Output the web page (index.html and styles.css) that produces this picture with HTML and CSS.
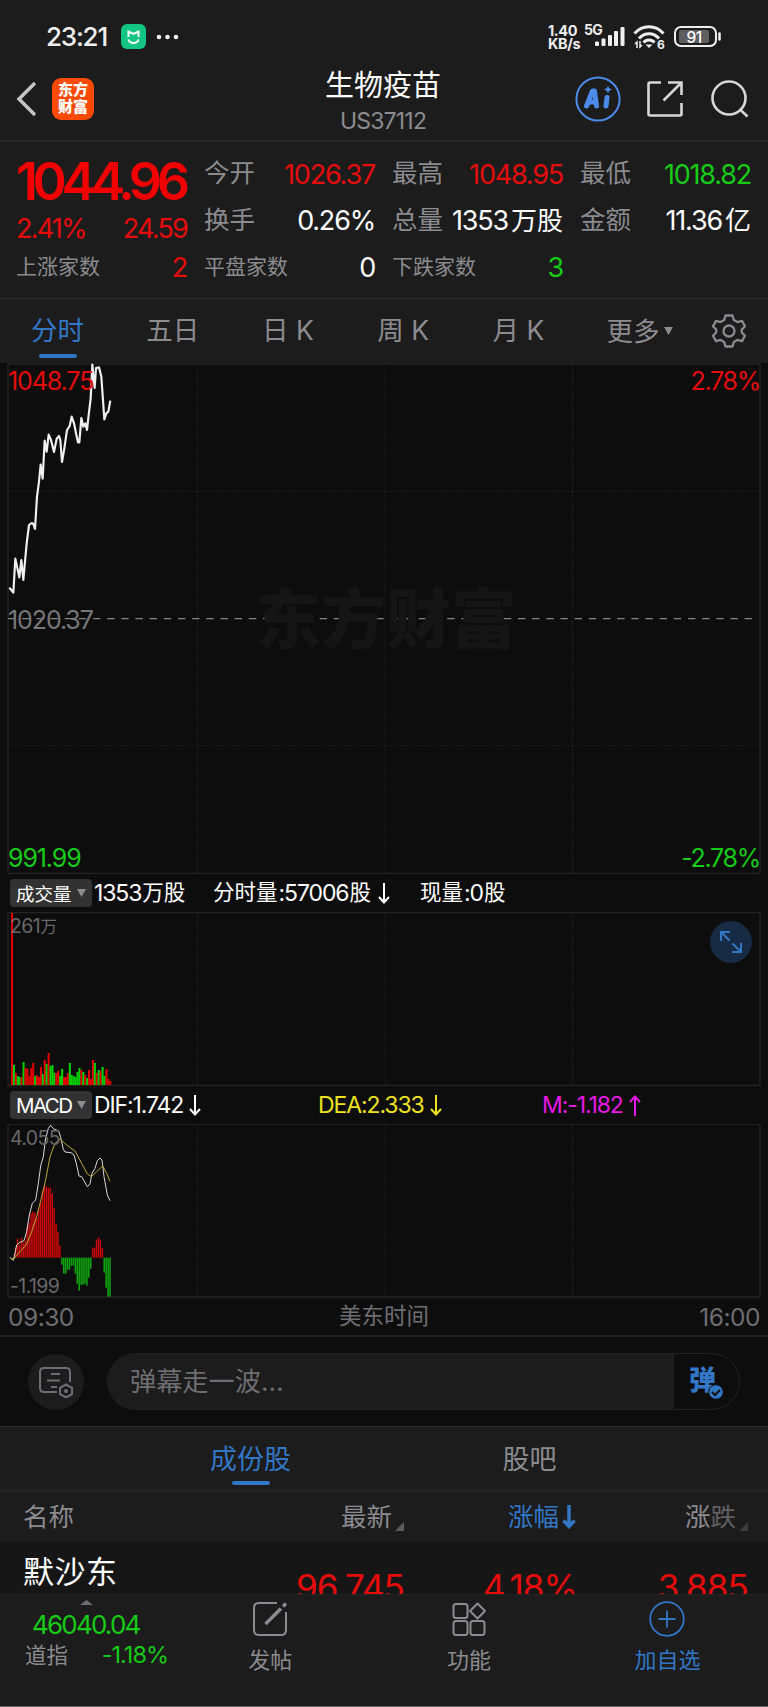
FILE: index.html
```html
<!DOCTYPE html>
<html lang="zh-CN">

<head>
    <meta charset="UTF-8">
    <meta name="viewport" content="width=device-width, initial-scale=1.0">
    <title>生物疫苗 US37112</title>
    <link rel="stylesheet" href="styles.css">
</head>

<body>
    <div class="status">
        <span class="clock">23:21</span>
        <svg class="mi" width="25" height="25" viewBox="0 0 25 25">
            <rect width="25" height="25" rx="6" fill="#12c583" />
            <path d="M7.500 13V7.500l5 2.500 5-2.500V13M7.500 15.500c1 4.500 9 4.500 10 0" fill="none" stroke="#fff" stroke-width="2" />
        </svg>
        <svg class="dots" width="24" height="6" viewBox="0 0 24 6" fill="#eee">
            <circle cx="3" cy="3" r="2.300" />
            <circle cx="11.500" cy="3" r="2.300" />
            <circle cx="20" cy="3" r="2.300" />
        </svg>
        <div class="speed">1.40<br>KB/s</div>
        <span class="net">5G</span>
        <svg class="signal" width="30" height="20" viewBox="0 0 30 20" fill="#eee">
            <rect x="0" y="14.500" width="4" height="4.500" rx="1" />
            <rect x="6.500" y="11.500" width="4" height="7.500" rx="1" />
            <rect x="13" y="8" width="4" height="11" rx="1" />
            <rect x="19" y="4" width="4" height="15" rx="1" />
            <rect x="25.500" y="0" width="4" height="19" rx="1" />
        </svg>
        <svg class="wifi" width="32" height="26" viewBox="0 0 32 26" fill="none" stroke="#eee" stroke-width="3">
            <path d="M1.500 9.500C9.500 .5 22.500 .5 30.500 9.500" />
            <path d="M6 14.500c5.500-6.500 14.500-6.500 20 0" />
            <path d="M10.500 18.500c3-3.500 8-3.500 11 0" />
            <path d="M12.500 20.500h7L16 24z" fill="#eee" stroke="none" />
            <path d="M4 24v-6l-2 2M7 17v6l2-2" stroke-width="1.500" />
            <text class="six" x="24" y="24.500" fill="#eee" stroke="none">6</text>
        </svg>
        <svg class="battery" width="48" height="22" viewBox="0 0 48 22">
            <rect x="1" y="1" width="41" height="19" rx="6" fill="none" stroke="#eee" stroke-width="2" />
            <rect x="5" y="4" width="30" height="13" rx="2" fill="#5e5e5e" />
            <path d="M45.500 7.500v6" stroke="#eee" stroke-width="2.500" stroke-linecap="round" />
            <text x="12.500" y="16.500" fill="#fff">91</text>
        </svg>
    </div>

    <div class="header">
        <svg class="back" width="22" height="36" viewBox="0 0 22 36">
            <path d="M19 2L3 18l16 16" fill="none" stroke="#c4c4c4" stroke-width="3.500" />
        </svg>
        <div class="logo">东方<br>财富</div>
        <div class="title">
            <h1>生物疫苗</h1>
            <p>US37112</p>
        </div>
        <svg class="ai" width="46" height="46" viewBox="0 0 46 46">
            <circle cx="23" cy="23" r="21.600" fill="none" stroke="#4d8bea" stroke-width="2" />
            <path d="M11.500 30L17.500 15h2L21.500 30M14 26h6M32 21.500L31 30" fill="none" stroke="#4d8bea" stroke-width="5" stroke-linecap="round" stroke-linejoin="round" />
            <path d="M33 9.500l1.200 2.800 2.800 1.200-2.800 1.200L33 17.500l-1.200-2.800-2.800-1.200 2.800-1.200z" fill="#4d8bea" />
        </svg>
        <svg class="share" width="36" height="36" viewBox="0 0 36 36" fill="none" stroke="#d6d6d6" stroke-width="2.600">
            <path d="M14 1.500H3Q1.500 1.500 1.500 3v30Q1.500 34.500 3 34.500h30q1.500 0 1.500-1.500V22M21 1.500h13.500V14M34 2L16.500 19.500" />
        </svg>
        <svg class="search" width="38" height="38" viewBox="0 0 38 38" fill="none" stroke="#d6d6d6" stroke-width="2.600">
            <circle cx="18" cy="18" r="16.500" />
            <path d="M28.500 29l8 7.500" />
        </svg>
    </div>

    <div class="quote">
        <div class="now">
            <div class="price red">1044.96</div>
            <div class="pair red"><span>2.41%</span><span>24.59</span></div>
        </div>
        <div class="cell"><label>今开</label><span class="red">1026.37</span></div>
        <div class="cell"><label>最高</label><span class="red">1048.95</span></div>
        <div class="cell"><label>最低</label><span class="green">1018.82</span></div>
        <div class="cell"><label>换手</label><span>0.26%</span></div>
        <div class="cell"><label>总量</label><span>1353<i>万股</i></span></div>
        <div class="cell"><label>金额</label><span>11.36<i>亿</i></span></div>
        <div class="cell small"><label>上涨家数</label><span class="red">2</span></div>
        <div class="cell small"><label>平盘家数</label><span>0</span></div>
        <div class="cell small"><label>下跌家数</label><span class="green">3</span></div>
    </div>

    <div class="tabs">
        <div class="tab active">分时</div>
        <div class="tab">五日</div>
        <div class="tab">日 K</div>
        <div class="tab">周 K</div>
        <div class="tab">月 K</div>
        <div class="tab more">更多<svg width="9" height="8" viewBox="0 0 10 9"><path d="M0 0h10L5 9z" fill="#8b8b90" /></svg></div>
        <svg class="gear" width="34" height="34" viewBox="0 0 34 34" fill="none" stroke="#8b8b90" stroke-width="2.300" stroke-linejoin="round">
            <path d="M13.500 1.500h7l1.300 4.500 3.600 2.100 4.600-1.200 3 5.300-3.200 3.300v3l3.200 3.300-3 5.300-4.600-1.200-3.600 2.100-1.300 4.500h-7L12.200 28l-3.600-2.100L4 27.100l-3-5.300 3.200-3.300v-3L1 12.200l3-5.300 4.600 1.200L12.200 6z" />
            <circle cx="17" cy="17" r="5.500" />
        </svg>
    </div>

    <div class="charts">
        <div class="chart price-chart">
            <div class="watermark">东方财富</div>
            <svg viewBox="0 9 2304 1533">
                <g class="grid">
                    <path d="M592.500 12V1540M1155 12V1540M1717.500 12V1540M24 394H2280M24 1157H2280" />
                </g>
                <path class="frame" d="M24 12H2280V1540H24z" />
                <path class="base" d="M24 776H2265" />
                <polyline class="price-line" points="28,683 40,698 46,596 58,652 64,600 70,660 80,550 87,495 95,489 100,492 105,507 111,410 117,365 122,314 128,356 134,242 140,275 146,224 153,240 162,276 170,236 177,228 181,240 186,306 193,265 201,210 209,198 215,170 222,190 228,220 234,247 238,247 244,174 250,200 256,190 261,210 266,165 272,115 277,14 284,84 288,24 297,22 304,50 313,178 319,160 325,155 331,122" />
            </svg>
            <span class="label top red">1048.75</span>
            <span class="label top right red">2.78%</span>
            <span class="label mid">1020.37</span>
            <span class="label bottom green">991.99</span>
            <span class="label bottom right green">-2.78%</span>
        </div>

        <div class="info">
            <div class="pick">成交量<svg width="9" height="8" viewBox="0 0 9 8"><path d="M0 0h9L4.500 8z" fill="#8b8b90" /></svg></div>
            <span class="v1">1353<i>万股</i></span>
            <span class="v2"><i>分时量</i>:57006<i>股</i><svg class="arrow" width="12" height="21" viewBox="0 0 12 21"><path d="M6 0v19M1 14l5 5.500L11 14" /></svg></span>
            <span class="v3"><i>现量</i>:0<i>股</i></span>
        </div>
        <div class="chart sub">
            <svg viewBox="0 156 2304 522">
                <path class="grid" d="M592.500 158V676M1155 158V676M1717.500 158V676" />
                <path class="frame" d="M24 158H2280V676H24z" />
                <g id="volume"></g>
            </svg>
            <span class="label scale-top">261<i>万</i></span>
            <div class="expand">
                <svg width="22" height="22" viewBox="0 0 22 22" fill="none" stroke="#3277c6" stroke-width="2">
                    <path d="M1 10V1h9M1 1l8.500 8.500M21 12v9h-9M21 21l-8.500-8.500" />
                </svg>
            </div>
        </div>

        <div class="info">
            <div class="pick macd">MACD<svg width="9" height="8" viewBox="0 0 9 8"><path d="M0 0h9L4.500 8z" fill="#8b8b90" /></svg></div>
            <span class="dif">DIF:1.742<svg class="arrow" width="12" height="21" viewBox="0 0 12 21"><path d="M6 0v19M1 14l5 5.500L11 14" /></svg></span>
            <span class="dea">DEA:2.333<svg class="arrow" width="12" height="21" viewBox="0 0 12 21"><path d="M6 0v19M1 14l5 5.500L11 14" /></svg></span>
            <span class="m">M:-1.182<svg class="arrow" width="12" height="21" viewBox="0 0 12 21"><path d="M6 21V2M1 7l5-5.500L11 7" /></svg></span>
        </div>
        <div class="chart sub">
            <svg viewBox="0 132 2304 522">
                <path class="grid" d="M592.500 133V651M1155 133V651M1717.500 133V651" />
                <path class="frame" d="M24 133H2280V651H24z" />
                <g id="macd"></g>
                <polyline class="line-dif" points="30,533 40,541 46,515 50,495 60,487 72,482 80,455 88,405 97,370 107,360 115,310 122,258 130,230 136,180 145,145 152,136 160,146 176,153 182,172 190,208 195,216 213,218 222,225 230,255 237,288 245,290 262,320 270,312 276,280 285,265 292,242 300,234 306,240 312,290 322,345 330,362" />
                <polyline class="line-dea" points="30,533 40,538 60,515 80,492 95,455 110,410 125,350 137,300 150,230 165,190 180,177 200,195 225,213 245,250 262,282 274,290 290,275 308,258 320,280 330,304" />
            </svg>
            <span class="label scale-top">4.055</span>
            <span class="label scale-bottom">-1.199</span>
        </div>

        <div class="time">
            <span>09:30</span>
            <i>美东时间</i>
            <span>16:00</span>
        </div>
    </div>

    <div class="danmu">
        <div class="danmu-set">
            <svg width="36" height="32" viewBox="0 0 36 32" fill="none" stroke="#6e6e72" stroke-width="2">
                <path d="M19 26H6q-4 0-4-4V6q0-4 4-4h22q4 0 4 4v10M13 8h9M9 14.500h13M13 21h6" />
                <path d="M28 18.500l6 3.300v6.400l-6 3.300-6-3.300v-6.400z" />
                <circle cx="28" cy="25" r="1" />
            </svg>
        </div>
        <div class="danmu-box">
            <div class="danmu-input">弹幕走一波…</div>
            <div class="danmu-on">弹
                <svg width="16" height="16" viewBox="0 0 16 16">
                    <circle cx="8" cy="8" r="7.300" fill="#3277c6" stroke="#0d0d0d" />
                    <path d="M4 8l3 3 5-5" fill="none" stroke="#0d0d0d" stroke-width="2" />
                </svg>
            </div>
        </div>
    </div>

    <div class="list-tabs">
        <div class="list-tab active">成份股</div>
        <div class="list-tab">股吧</div>
    </div>

    <div class="row head">
        <span>名称</span>
        <span>最新<svg class="corner" width="9" height="9" viewBox="0 0 9 9"><path d="M9 0v9H0z" fill="#5c5c5f" /></svg></span>
        <span class="blue">涨幅<svg class="sort" width="14" height="24" viewBox="0 0 14 24"><path d="M7 0v21M1.500 15.500L7 21.500l5.500-6" fill="none" stroke="#3277c6" stroke-width="3.500" /></svg></span>
        <span>涨<em>跌</em><svg class="corner" width="9" height="9" viewBox="0 0 9 9"><path d="M9 0v9H0z" fill="#3b3b3d" /></svg></span>
    </div>
    <div class="row stock">
        <span class="name">默沙东</span>
        <span class="red">96.745</span>
        <span class="red">4.18%</span>
        <span class="red">3.885</span>
    </div>

    <div class="footer">
        <div class="index">
            <svg class="caret" width="13" height="5" viewBox="0 0 13 5"><path d="M0 5l6.500-5L13 5z" fill="#6e6e72" /></svg>
            <div class="index-value">46040.04</div>
            <div class="index-row"><i>道指</i><span>-1.18%</span></div>
        </div>
        <div class="action">
            <svg width="36" height="36" viewBox="0 0 36 36" fill="none" stroke="#8b8b90" stroke-width="2">
                <path d="M25 2H7Q2 2 2 7v22q0 5 5 5h22q5 0 5-5V11" />
                <path d="M13.500 23L29 7.500M31 5.500L34 2.500" stroke-width="3.500" />
            </svg>
            <span>发帖</span>
        </div>
        <div class="action">
            <svg width="36" height="36" viewBox="0 0 36 36" fill="none" stroke="#8b8b90" stroke-width="2">
                <rect x="2.500" y="3" width="14" height="14" rx="2.500" />
                <rect x="2.500" y="20" width="14" height="14" rx="2.500" />
                <rect x="19.500" y="20" width="14" height="14" rx="2.500" />
                <path d="M26.500 2.500l7.500 7.500-7.500 7.500L19 10z" stroke-linejoin="round" />
            </svg>
            <span>功能</span>
        </div>
        <div class="action blue">
            <svg width="36" height="36" viewBox="0 0 36 36" fill="none" stroke="#3277c6" stroke-width="1.800">
                <circle cx="18" cy="18" r="16.800" />
                <path d="M18 9.500v17M9.500 18h17" />
            </svg>
            <span>加自选</span>
        </div>
    </div>

    <script>
        var step = 5.78;

        // volume per minute, sign gives the colour
        var volume = [172, -20, 12, -9, -8, 8, -23, 17, 16, 9, 17, 22, -9, 10, 8, 18, -11, 25, -21, 32, -19, -20, -12,
            12, 14, -9, -16, 8, 8, 12, -22, -10, -9, -8, -13, -17, 15, -13, 10, -7, 15, 6, 25, -22, 12, -15, 14, -18,
            -9, 16, 6, 4];

        var macd = [0, -1, 10, 19, 13, 20, 15, 17, 30, 35, 44, 46, 45, 40, 49, 55, 67, 72, 71, 70, 70, 64, 50, 34, 26,
            12, -7, -16, -16, -12, -12, -8, -8, -16, -26, -33, -27, -27, -26, -28, -20, -11, 10, 10, 18, 20, 18, 10,
            -15, -30, -39, -39];

        function bars(id, data, base, signed, width) {
            var add = "";
            for (var i = 0; i < data.length; i++) {
                var h = Math.abs(data[i]) * 3;
                var y = signed && data[i] < 0 ? base : base - h;
                add += `<rect class="${data[i] < 0 ? "down" : "up"}" x="${33 + i * step}" y="${y}" width="${width}" height="${h}"/>`;
            }
            document.querySelector(id).innerHTML = add;
        }

        bars("#volume", volume, 675, false, 6.2);
        bars("#macd", macd, 533, true, 4.6);
    </script>
</body>

</html>
```

FILE: styles.css
```css
* {
    padding: 0;
    margin: 0;
    box-sizing: border-box;
}

body {
    width: 768px;
    height: 1707px;
    overflow: hidden;
    display: flex;
    flex-direction: column;
    background-color: #1c1c1c;
    color: #fff;
    font-family: Inter, "Noto Sans CJK SC", sans-serif;
    border-bottom: 1px solid #626262;
}

body > div {
    flex-shrink: 0;
}

svg {
    display: block;
    flex-shrink: 0;
}

i, em {
    font-style: normal;
    letter-spacing: 0;
}

.red {
    color: #e60c0c;
}

.green {
    color: #16cc16;
}

.blue {
    color: #3277c6;
}

/* status bar */

.status {
    height: 70px;
    padding: 3px 46px 0 46px;
    display: flex;
    align-items: center;
    color: #eee;
}

.clock {
    font-size: 26px;
    font-weight: 500;
    width: 75px;
    letter-spacing: -1.2px;
}

.dots {
    margin-left: 10px;
}

.speed {
    margin-left: auto;
    width: 36px;
    font-size: 14.5px;
    font-weight: 700;
    line-height: 13px;
    letter-spacing: -0.4px;
}

.net {
    font-size: 14px;
    font-weight: 700;
    line-height: 16px;
    align-self: flex-start;
    margin: 19px -9px 0 0;
    width: 20px;
    letter-spacing: -0.8px;
}

.signal {
    margin-right: 8px;
}

.wifi {
    margin-right: 9px;
}

.six {
    font-size: 12px;
    font-weight: 700;
}

.battery text {
    font-size: 15.5px;
    font-weight: 500;
    letter-spacing: -0.5px;
}

/* header */

.header {
    height: 72px;
    padding: 0 19px 12px 16px;
    display: flex;
    align-items: center;
    border-bottom: 2px solid #272727;
}

.logo {
    width: 42px;
    height: 42px;
    margin-left: 14px;
    border-radius: 9px;
    background-color: #ff4a05;
    font-size: 15px;
    font-weight: 900;
    line-height: 17px;
    text-align: center;
    padding-top: 3px;
}

.title {
    flex: 1;
    text-align: center;
    padding: 8px 0 0 97px;
}

.title h1 {
    font-size: 29px;
    font-weight: 400;
    line-height: 36px;
}

.title p {
    font-size: 23px;
    font-weight: 400;
    line-height: 35px;
    color: #8b8b90;
    letter-spacing: -0.8px;
}

.share {
    margin-left: 26px;
}

.search {
    margin-left: 28px;
}

/* quote */

.quote {
    height: 157px;
    padding: 9px 16px 6px;
    display: grid;
    grid-template-columns: repeat(4, 171px);
    grid-template-rows: 46px 47px 47px;
    column-gap: 17px;
    border-bottom: 1px solid #2c2c2c;
}

.now {
    grid-row: span 2;
}

.price {
    font-size: 52px;
    font-weight: 600;
    line-height: 61px;
    letter-spacing: -5.4px;
    color: #f20000;
}

.pair,
.cell {
    display: flex;
    align-items: center;
    justify-content: space-between;
    font-size: 27px;
    letter-spacing: -1.2px;
    white-space: nowrap;
}

.pair {
    line-height: 34px;
    letter-spacing: -1.8px;
}

.cell span {
    margin-right: 0;
}

.cell label {
    font-size: 25.5px;
    line-height: 30px;
    margin-top: -2px;
    color: #8b8b90;
    letter-spacing: 0;
}

.cell i {
    font-size: 26px;
    line-height: 30px;
    margin-left: 3px;
}

.cell.small label {
    font-size: 21px;
    margin-top: -1px;
}

/* period tabs */

.tabs {
    height: 64px;
    display: flex;
    align-items: center;
    color: #8b8b90;
    font-size: 26.5px;
}

.tab {
    width: 115.200px;
    height: 64px;
    line-height: 63px;
    text-align: center;
    position: relative;
    white-space: nowrap;
}

.tab.active,
.list-tab.active {
    color: #3277c6;
}

.tab.active::after,
.list-tab.active::after {
    content: "";
    position: absolute;
    left: 50%;
    bottom: 5px;
    width: 38px;
    height: 4px;
    margin-left: -19px;
    border-radius: 2px;
    background-color: #3277c6;
}

.more {
    display: flex;
    align-items: center;
    justify-content: center;
    gap: 5px;
    width: 128px;
}

.gear {
    margin-left: 8px;
}

/* charts */

.charts {
    height: 974px;
    background-color: #0d0d0d;
    border-bottom: 2px solid #1f1f1f;
}

.chart {
    position: relative;
}

.chart > svg {
    width: 768px;
}

.price-chart,
.price-chart > svg {
    height: 511px;
}

.sub,
.sub > svg {
    height: 174px;
}

.grid {
    fill: none;
    stroke: #232323;
    stroke-width: 3;
    stroke-dasharray: 4 3;
}

.frame {
    fill: none;
    stroke: #242424;
    stroke-width: 4;
}

.base {
    fill: none;
    stroke: #858585;
    stroke-width: 4;
    stroke-dasharray: 22 20.500;
}

.price-line {
    fill: none;
    stroke: #f0f0f0;
    stroke-width: 6.5;
    stroke-linejoin: round;
}

.line-dif,
.line-dea {
    fill: none;
    stroke: #d8d8d8;
    stroke-width: 3;
}

.line-dea {
    stroke: #b9a72e;
}

.up {
    fill: #e00000;
}

.down {
    fill: #00cf00;
}

#macd .up {
    fill: #c80808;
}

#macd .down {
    fill: #10a510;
}

.watermark {
    position: absolute;
    left: 256px;
    top: 212px;
    font-size: 65px;
    line-height: 90px;
    font-weight: 900;
    color: #151515;
}

.label {
    position: absolute;
    left: 8px;
    font-size: 25px;
    line-height: 30px;
    letter-spacing: -1.1px;
}

.label.top {
    top: 3px;
}

.label.mid {
    top: 242px;
    color: #77777a;
}

.label.bottom {
    bottom: 1px;
}

.label.right {
    left: auto;
    right: 8px;
    letter-spacing: -1.3px;
}

.label.scale-top,
.label.scale-bottom {
    left: 10px;
    top: -1px;
    font-size: 19.5px;
    letter-spacing: -0.6px;
    color: #68686b;
}

.label.scale-top i {
    font-size: 17px;
}

.label.scale-bottom {
    top: auto;
    bottom: -3px;
}

.expand {
    position: absolute;
    right: 16px;
    top: 9px;
    width: 42px;
    height: 42px;
    border-radius: 50%;
    background-color: #182b44;
    display: flex;
    align-items: center;
    justify-content: center;
}

.info {
    height: 38px;
    display: flex;
    align-items: center;
    font-size: 23px;
    letter-spacing: -1.1px;
    white-space: nowrap;
    padding-left: 10px;
}

.info i {
    font-size: 21.5px;
    line-height: 30px;
    padding: 0 1px;
    margin-top: -2px;
}

.info span {
    display: flex;
    align-items: center;
}

.pick {
    width: 82px;
    height: 28px;
    margin-right: 2px;
    padding: 0 6px;
    display: flex;
    align-items: center;
    justify-content: space-between;
    border-radius: 4px;
    background-color: #323232;
    font-size: 18.5px;
    letter-spacing: 0;
}

.macd {
    font-size: 20.5px;
    letter-spacing: -1.6px;
}

.arrow {
    margin-left: 6px;
    fill: none;
    stroke: currentColor;
    stroke-width: 2;
}

.v1 {
    width: 118px;
}

.v2 {
    width: 207px;
}

.dif {
    width: 224px;
}

.dea {
    width: 224px;
    color: #efe21f;
}

.m {
    color: #e619e6;
}

.time {
    height: 37px;
    padding: 0 8px;
    display: grid;
    grid-template-columns: 1fr auto 1fr;
    align-items: center;
    color: #6e6e72;
    font-size: 24.5px;
    letter-spacing: -0.5px;
}

.time span:last-child {
    text-align: right;
}

.time i {
    font-size: 22.5px;
    line-height: 30px;
    margin-top: -1px;
}

/* danmu */

.danmu {
    height: 90px;
    padding: 0 28px;
    display: flex;
    align-items: center;
    background-color: #0d0d0d;
    border-bottom: 1px solid #2c2c2c;
}

.danmu-set {
    width: 56px;
    height: 56px;
    border-radius: 50%;
    background-color: #1c1c1c;
    display: flex;
    align-items: center;
    justify-content: center;
}

.danmu-box {
    flex: 1;
    height: 57px;
    margin-left: 23px;
    display: flex;
    border: 1px solid #232323;
    border-radius: 29px;
    overflow: hidden;
}

.danmu-input {
    width: 566px;
    padding-left: 22px;
    line-height: 55px;
    background-color: #1c1c1c;
    color: #6e6e72;
    font-size: 26.2px;
}

.danmu-on {
    position: relative;
    padding-left: 15px;
    line-height: 54px;
    font-size: 27px;
    font-weight: 900;
    color: #3277c6;
}

.danmu-on svg {
    position: absolute;
    left: 34px;
    top: 30px;
}

/* list */

.list-tabs {
    height: 65px;
    padding-left: 111px;
    display: flex;
    border-bottom: 2px solid #252525;
}

.list-tab {
    width: 279px;
    position: relative;
    line-height: 65px;
    text-align: center;
    font-size: 27px;
    color: #8b8b90;
}

.row {
    display: grid;
    grid-template-columns: 161px 220px 173px 171px;
    padding: 0 20px 0 23px;
}

.row span + span {
    text-align: right;
}

.head {
    height: 50px;
    line-height: 49px;
    font-size: 25.500px;
    color: #8b8b90;
}

.head .blue {
    color: #3277c6;
    padding-right: 1px;
}

.head em {
    color: #606064;
}

.corner,
.sort {
    display: inline-block;
    margin-left: 3px;
    vertical-align: -5px;
}

.sort {
    vertical-align: -3px;
}

.stock {
    height: 52px;
    overflow: hidden;
    background-color: #161616;
    font-size: 35px;
    letter-spacing: -0.9px;
    line-height: 91px;
}

.stock .name {
    font-size: 31px;
    line-height: 60px;
    letter-spacing: 0.5px;
}

/* footer */

.footer {
    flex: 1;
    display: flex;
    border-top: 1px solid #242424;
    background-color: #1c1c1c;
    color: #8b8b90;
}

.index {
    width: 171px;
    padding: 5px 3px 0 25px;
}

.caret {
    margin-left: 55px;
}

.index-value {
    padding-left: 7px;
    margin-top: 4px;
    font-size: 26px;
    line-height: 32px;
    letter-spacing: -1.8px;
    color: #16cc16;
}

.index-row {
    display: flex;
    justify-content: space-between;
    align-items: center;
    line-height: 28px;
    font-size: 21.500px;
}

.index-row i {
    margin-top: -1px;
}

.index-row span {
    font-size: 23.5px;
    letter-spacing: -1px;
    color: #16cc16;
}

.action {
    width: 198.600px;
    padding-top: 6px;
    display: flex;
    flex-direction: column;
    align-items: center;
    gap: 8px;
    font-size: 22px;
    line-height: 30px;
}

.action.blue {
    color: #3277c6;
}
```
